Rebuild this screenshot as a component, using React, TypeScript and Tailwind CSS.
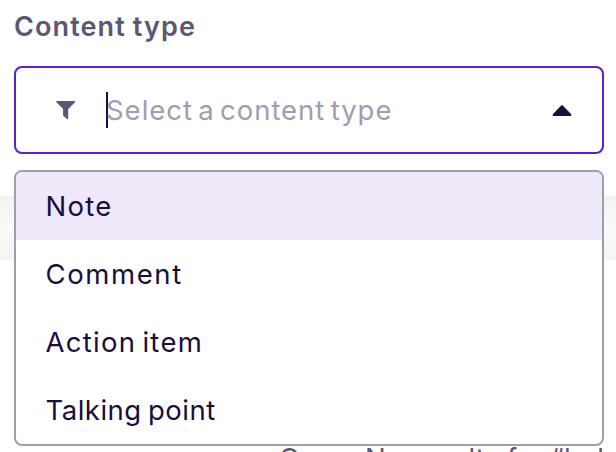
const options = [
  { label: "Note", spacing: "tracking-[1.3px]" },
  { label: "Comment", spacing: "tracking-[1.6px]" },
  { label: "Action item", spacing: "tracking-[1.3px] [word-spacing:-3px]" },
  { label: "Talking point", spacing: "tracking-[0.5px] [word-spacing:-2px]" },
];

function FilterIcon() {
  return (
    <svg className="h-5 w-5 shrink-0" viewBox="0 0 20 20" fill="#5d5675">
      <path d="M0.7 1h18q0.8 0.5 0 1.6L12.2 9v9.8q-0.4 0.6-1.1 0.2L7.7 16.2q-0.6-0.5-0.6-1.3V9L0.6 2.6Q-0.1 1.6 0.7 1z" />
    </svg>
  );
}

function CaretUp() {
  return (
    <svg className="mt-0.5 h-3 w-5 shrink-0" viewBox="0 0 20 12" fill="#180f3f">
      <path d="M9.2 0.6q0.8-0.7 1.6 0L19.2 9.3q0.6 1.4-0.6 1.6H1.4Q0.2 10.7 0.8 9.3z" />
    </svg>
  );
}

function Menu() {
  return (
    <ul className="absolute -left-0.5 -right-0.5 top-[102px] z-10 overflow-hidden rounded-lg border-2 border-[#a19db0] bg-white">
      {options.map((o, i) => (
        <li
          key={o.label}
          className={`flex h-[68px] items-center px-[29.5px] pt-0.5 text-[27.5px] text-[#180f3f] ${o.spacing} ${i === 0 ? "bg-[#efe8f8]" : ""}`}
        >
          {o.label}
        </li>
      ))}
    </ul>
  );
}

export default function App() {
  return (
    <div className="h-[452px] w-[616px] overflow-hidden bg-white font-['Inter','Liberation_Sans',sans-serif]">
      <section className="h-[196px] pl-3.5 pr-3">
        <label className="flex h-[66px] items-start pt-2 text-[27px] font-semibold leading-[38px] tracking-[1.1px] [word-spacing:-1px] text-[#5d5675]">
          Content type
        </label>
        <div className="relative flex h-[88px] items-center rounded-lg border-2 border-[#5f1ed2] bg-white pl-10 pr-[30px]">
          <FilterIcon />
          <span className="ml-[30px] h-9 w-0.5 bg-[#180f3f]" />
          <span className="-ml-0.5 flex-1 whitespace-nowrap pt-0.5 text-[27.5px] tracking-[0.98px] [word-spacing:-3.4px] text-[#a19db0]">
            Select a content type
          </span>
          <CaretUp />
          <Menu />
        </div>
      </section>
      <div className="h-16 bg-linear-to-b from-[#f2f1f0] via-[#fcfbf9] via-50% to-[#f5f4f2]" />
      <p className="whitespace-nowrap pl-[279px] pt-[178px] text-[27.5px] leading-10 tracking-[0.4px] [word-spacing:-1px] text-[#5d5675]">
        Oops. No results for “help”
      </p>
    </div>
  );
}
